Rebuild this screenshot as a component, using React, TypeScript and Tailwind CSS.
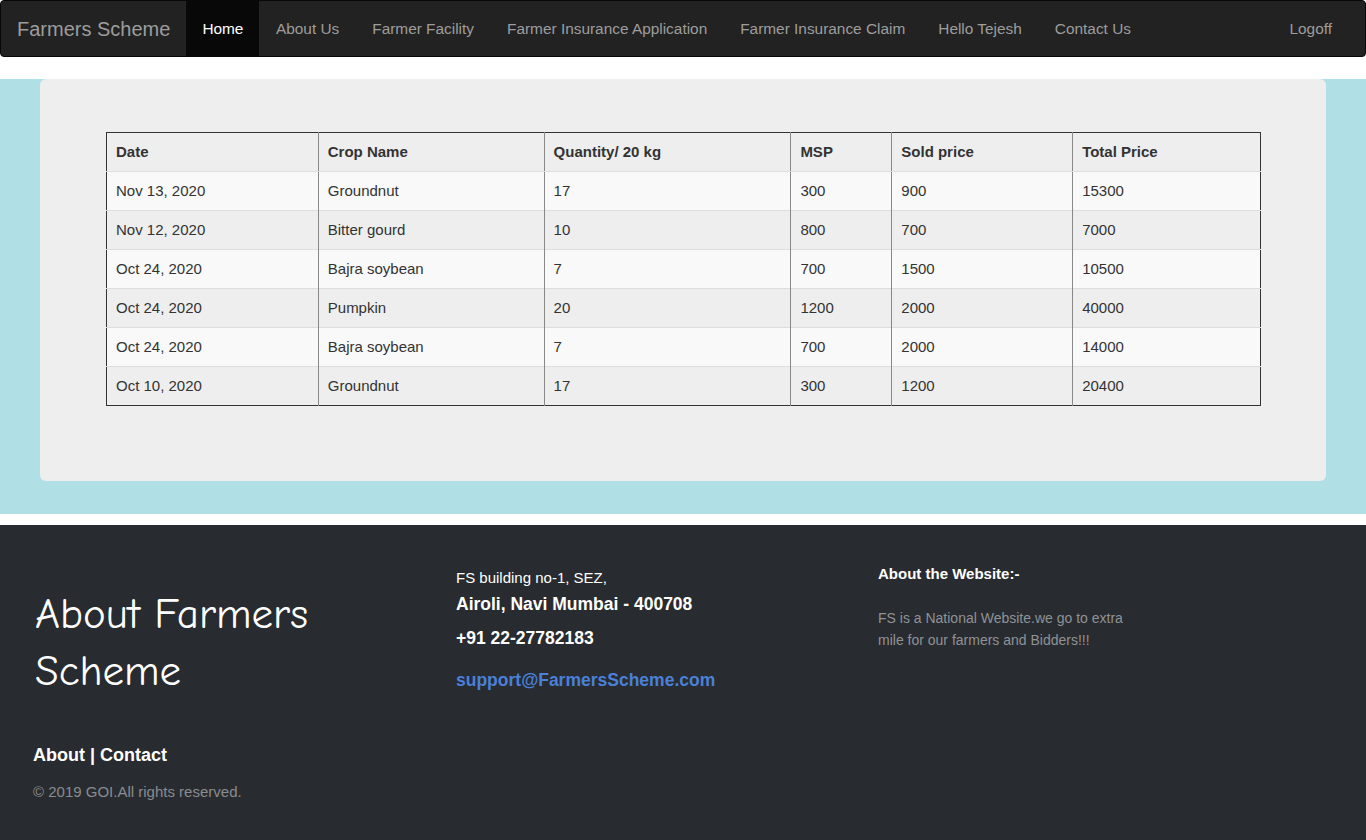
import React from "react";

const navLinks = [
  "About Us",
  "Farmer Facility",
  "Farmer Insurance Application",
  "Farmer Insurance Claim",
  "Hello Tejesh",
  "Contact Us",
];

const columns = [
  { label: "Date", w: "w-[212px]" },
  { label: "Crop Name", w: "w-[226px]" },
  { label: "Quantity/ 20 kg", w: "w-[247px]" },
  { label: "MSP", w: "w-[101px]" },
  { label: "Sold price", w: "w-[181px]" },
  { label: "Total Price", w: "w-[188px]" },
];

const rows = [
  ["Nov 13, 2020", "Groundnut", "17", "300", "900", "15300"],
  ["Nov 12, 2020", "Bitter gourd", "10", "800", "700", "7000"],
  ["Oct 24, 2020", "Bajra soybean", "7", "700", "1500", "10500"],
  ["Oct 24, 2020", "Pumpkin", "20", "1200", "2000", "40000"],
  ["Oct 24, 2020", "Bajra soybean", "7", "700", "2000", "14000"],
  ["Oct 10, 2020", "Groundnut", "17", "300", "1200", "20400"],
];

const App = () => {
  return (
    <div className="min-h-screen bg-white font-['Liberation_Sans',Arial,sans-serif] text-[#333]">
      {/* Navbar */}
      <nav className="h-[57px] bg-[#222] border border-[#080808] rounded flex items-stretch text-[15.4px]">
        <a className="px-4 pt-px flex items-center text-[20px] text-[#9d9d9d]">
          Farmers Scheme
        </a>
        <a className="px-4 pt-px flex items-center bg-[#080808] text-white">Home</a>
        {navLinks.map((l) => (
          <a key={l} className="px-[16.5px] pt-px flex items-center text-[#9d9d9d]">
            {l}
          </a>
        ))}
        <a className="ml-auto mr-[17px] px-4 pt-px flex items-center text-[#9d9d9d]">Logoff</a>
      </nav>

      {/* Content */}
      <section className="mt-[22px] bg-[#b0e0e6] px-[40px] pb-[33px]">
        <div className="bg-[#eee] rounded-md pt-[53px] pb-[75px] px-[66px]">
          <table className="border-collapse border border-[#333] text-[15px] w-[1155px]">
            <thead>
              <tr className="h-[39px] bg-[#eee]">
                {columns.map((c, i) => (
                  <th
                    key={c.label}
                    className={`${c.w} text-left font-bold pl-[9px] border-b border-[#ddd] ${
                      i > 0 ? "border-l border-l-[#888]" : ""
                    }`}
                  >
                    {c.label}
                  </th>
                ))}
              </tr>
            </thead>
            <tbody>
              {rows.map((r, ri) => (
                <tr key={ri} className={`h-[39px] ${ri % 2 === 0 ? "bg-[#f9f9f9]" : "bg-[#eee]"}`}>
                  {r.map((cell, ci) => (
                    <td
                      key={ci}
                      className={`pl-[9px] border-t border-[#ddd] ${
                        ci > 0 ? "border-l border-l-[#888]" : ""
                      }`}
                    >
                      {cell}
                    </td>
                  ))}
                </tr>
              ))}
            </tbody>
          </table>
        </div>
      </section>

      {/* Footer */}
      <footer className="mt-[11px] bg-[#282b2f] h-[315px] pl-[33px] pt-[38px]">
        <div className="grid grid-cols-[422px_422px_1fr]">
          <div>
            <h2 className="mt-[23px] ml-[2px] text-white text-[43px] leading-[57px] font-['Comic_Sans_MS','Comic_Neue',cursive]">
              About Farmers
              <br />
              Scheme
            </h2>
            <div className="mt-[42px] text-white font-bold text-[18px]">About | Contact</div>
            <div className="mt-[12px] text-[#8a8c8f] text-[15px]">© 2019 GOI.All rights reserved.</div>
          </div>
          <div className="pl-px">
            <div className="text-white text-[15px] mt-[4px]">FS building no-1, SEZ,</div>
            <div className="text-white font-bold text-[17.5px] mt-[1px]">Airoli, Navi Mumbai - 400708</div>
            <div className="text-white font-bold text-[17.5px] mt-[8px]">+91 22-27782183</div>
            <div className="text-[#4a80d8] font-bold text-[17.5px] mt-[16px]">support@FarmersScheme.com</div>
          </div>
          <div className="pl-px">
            <div className="text-white font-bold text-[15px]">About the Website:-</div>
            <p className="mt-[21px] w-[262px] text-[#8f9296] text-[14px] leading-[22px]">
              FS is a National Website.we go to extra mile for our farmers and Bidders!!!
            </p>
          </div>
        </div>
      </footer>
    </div>
  );
};

export default App;
